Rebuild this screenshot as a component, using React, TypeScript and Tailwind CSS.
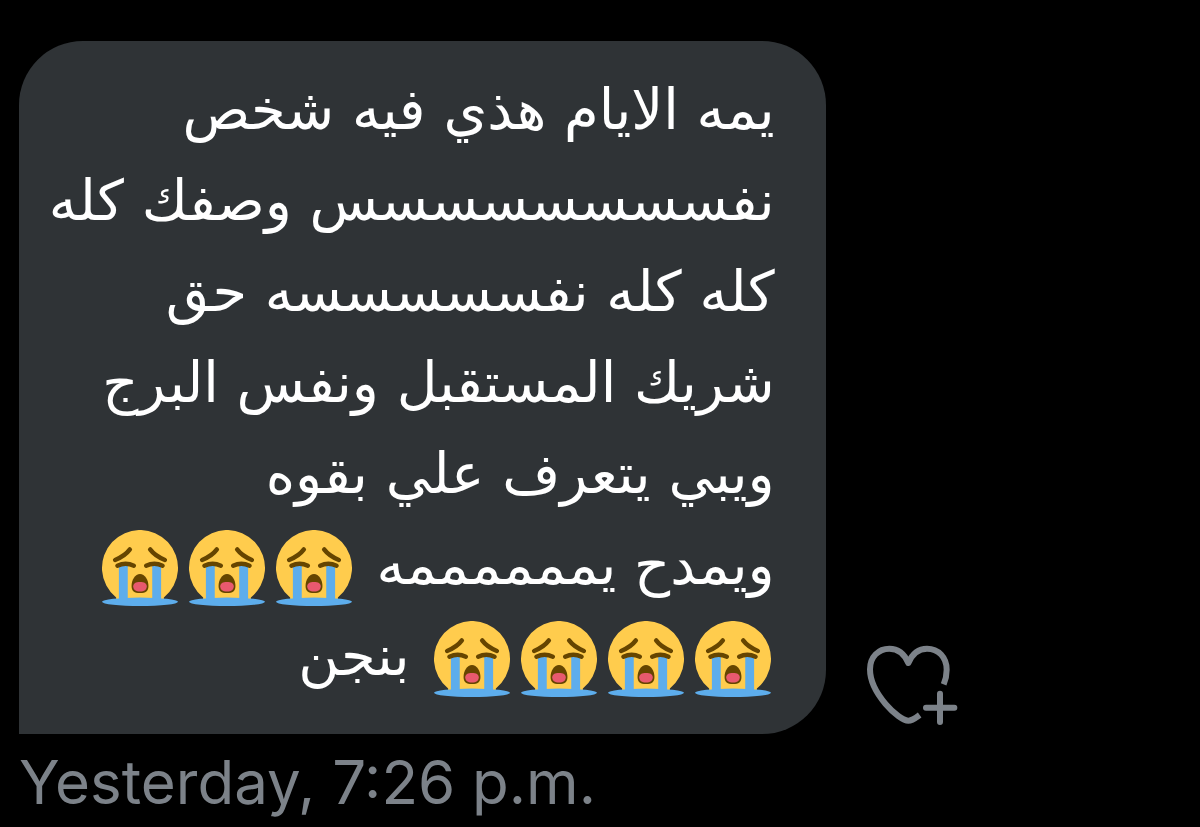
const lines = [
  { text: "يمه الايام هذي فيه شخص" },
  { text: "نف" + "س".repeat(8) + " وصفك كله" },
  { text: "كله كله نف" + "س".repeat(5) + "ه حق" },
  { text: "شريك المستقبل ونفس البرج" },
  { text: "ويبي يتعرف علي بقوه" },
  { text: "ويمدح ي" + "م".repeat(6) + "ه", after: 3 },
  { text: "بنجن", before: 4 },
];

function CryingFace() {
  return (
    <svg viewBox="0 0 36 36" role="img" aria-label="😭" className="size-[76px] shrink-0">
      <path fill="#FFCC4D" d="M29.3 32A18 18 0 1 0 6.7 32v2h22.6z" />
      <ellipse cx="18" cy="34" rx="18" ry="2" fill="#5DADEC" />
      <path fill="#5DADEC" d="M8 17h4.2v17H8zM23.8 17H28v17h-4.2z" />
      <g fill="none" stroke="#664500" strokeWidth="2.1" strokeLinecap="round">
        <path d="M6.2 14.2c3.2-1.3 5.4-2.8 7-5M29.8 14.2c-3.2-1.3-5.4-2.8-7-5" />
        <path d="M7.3 16.9c2.4-1.1 5.4-1.1 7.8 0M20.9 16.9c2.4-1.1 5.4-1.1 7.8 0" />
      </g>
      <path fill="#664500" d="M18 20.9c2.3 0 4 2.900 4 5.600 0 2.400-1.300 3.400-4 3.400s-4-1-4-3.400c0-2.700 1.700-5.600 4-5.600z" />
      <path fill="#E8596E" d="M18 24.600c2 0 3.200.7 3.200 2 0 1.700-1.200 2.500-3.200 2.500s-3.200-.8-3.200-2.500c0-1.300 1.200-2 3.200-2z" />
    </svg>
  );
}

function Faces({ count }: { count: number }) {
  return (
    <span className="flex gap-[11px] px-1 pt-[6px]">
      {Array.from({ length: count }, (_, i) => (
        <CryingFace key={i} />
      ))}
    </span>
  );
}

function HeartPlus() {
  return (
    <svg viewBox="0 0 390 312" fill="none" stroke="#7c8289" strokeWidth="18" className="h-[104px] w-[130px]">
      <path strokeLinejoin="round" d="M209 255c-11 8-22 17-34 17C146 272 60 190 60 118c0-38 26-62 58-62 26 0 46 17 57 43 11-26 31-43 56-43 34 0 59 26 59 63 0 16-3 30-9 44" />
      <path strokeLinecap="round" d="M228 233h85M270 191v85" />
    </svg>
  );
}

export default function App() {
  return (
    <main className="min-h-screen bg-black pt-[41px] pl-[19px]">
      <div className="flex items-end gap-6">
        <div
          dir="rtl"
          lang="ar"
          className="w-[68.3%] rounded-t-[64px] rounded-br-[64px] bg-[#2f3336] py-7 pr-[51px] pl-7 font-['DejaVu_Sans','Noto_Sans',sans-serif] text-[56px] leading-[82px] whitespace-nowrap text-white"
        >
          {lines.map((line) => (
            <p key={line.text} className="flex h-[91px] items-start gap-5">
              {line.before && <Faces count={line.before} />}
              <span>{line.text}</span>
              {line.after && <Faces count={line.after} />}
            </p>
          ))}
        </div>
        <button type="button" aria-label="Add reaction">
          <HeartPlus />
        </button>
      </div>
      <time className="mt-3 block font-['Inter',sans-serif] text-[60px] leading-[72px] text-[#7c8289]">Yesterday, 7:26 p.m.</time>
    </main>
  );
}
